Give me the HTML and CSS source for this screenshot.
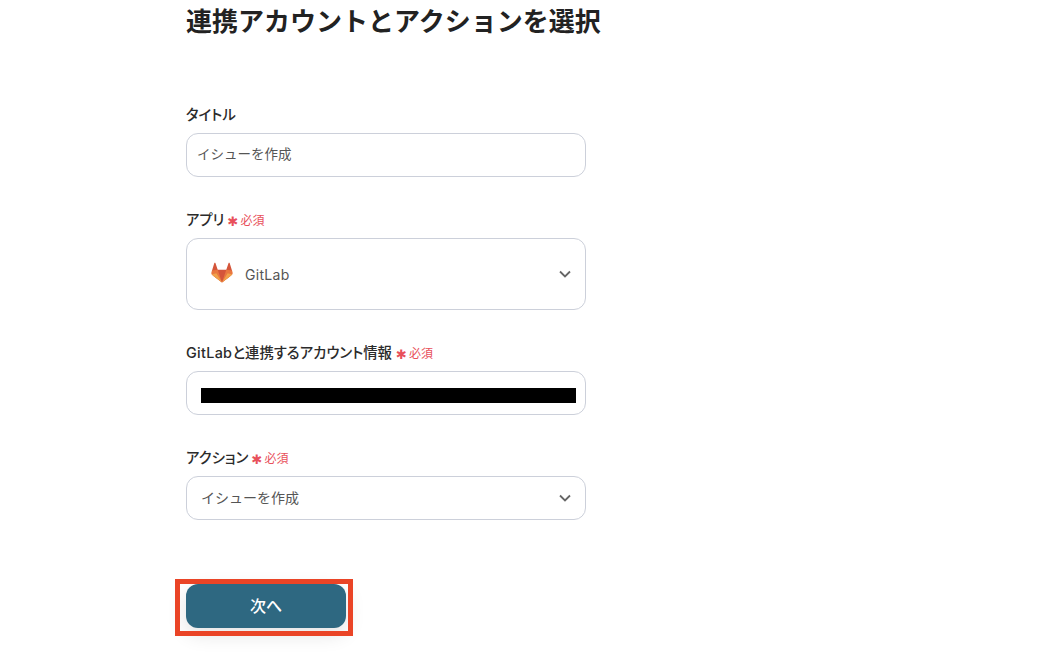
FILE: index.html
```html
<!DOCTYPE html>
<html lang="ja">
<head>
<meta charset="utf-8">
<title>連携アカウントとアクションを選択</title>
<link rel="stylesheet" href="styles.css">
</head>
<body>
<main class="page">
  <h1 class="title">連携アカウントとアクションを選択</h1>
  <form class="form">
    <div class="field">
      <div class="label">タイトル</div>
      <div class="box box-title"><span class="lift">イシューを作成</span></div>
    </div>
    <div class="field">
      <div class="label">アプリ<span class="req"><span class="star">✱</span>必須</span></div>
      <div class="box box-app">
        <svg class="logo" viewBox="0 0 24 23" width="22" height="21" aria-hidden="true">
          <path fill="#d4553a" d="M12 22.5 3 15.6 1 9.6 3.6 1.2c.2-.6 1-.6 1.2 0L7.3 8.6h9.4l2.5-7.4c.2-.6 1-.6 1.2 0L23 9.6l-2 6z"/>
          <path fill="#e9773f" d="M12 22.5 7.3 8.6 1 9.3.4 11.6c-.3 1 0 2 .9 2.7z"/>
          <path fill="#f0a24a" d="m5.8 12.4-5 1.4.5.4L7 18.5l5 4z"/>
          <path fill="#e9773f" d="M12 22.5 16.7 8.6l6.3.7.6 2.3c.3 1 0 2-.9 2.7z"/>
          <path fill="#f0a24a" d="m18.2 12.4 5 1.4-.5.4-5.7 4.3-5 4z"/>
        </svg>
        <span class="app-name">GitLab</span>
        <svg class="chev" viewBox="0 0 12 8" width="12" height="8" aria-hidden="true"><path d="M1 1.5l5 5 5-5" fill="none" stroke="#666" stroke-width="1.8"/></svg>
      </div>
    </div>
    <div class="field">
      <div class="label"><span class="latin">GitLab</span>と連携するアカウント情報<span class="req req-wide"><span class="star">✱</span>必須</span></div>
      <div class="box box-account"><div class="redact"></div></div>
    </div>
    <div class="field">
      <div class="label">アクション<span class="req"><span class="star">✱</span>必須</span></div>
      <div class="box box-action"><span class="lift-sm">イシューを作成</span>
        <svg class="chev" viewBox="0 0 12 8" width="12" height="8" aria-hidden="true"><path d="M1 1.5l5 5 5-5" fill="none" stroke="#666" stroke-width="1.8"/></svg>
      </div>
    </div>
  </form>
  <div class="actions">
    <button class="next" type="button">次へ</button>
    <div class="highlight"></div>
  </div>
</main>
</body>
</html>
```
FILE: styles.css
```css
* { box-sizing: border-box; }
html, body { margin: 0; height: 100%; background: #fff; overflow: hidden; }
body {
  font-family: Inter, "Noto Sans CJK JP", sans-serif;
  color: #333;
}
.page { padding: 0 0 0 186px; width: 100%; }
.title {
  margin: 0;
  height: 44px;
  font-size: 26px;
  line-height: 44px;
  font-weight: 600;
  color: #222;
}
.form { margin-top: 61px; width: 400px; display: flex; flex-direction: column; gap: 33px; }
.field { display: flex; flex-direction: column; gap: 8px; }
.label {
  height: 20px;
  line-height: 20px;
  font-size: 14.4px;
  font-weight: 500;
  font-feature-settings: "palt";
  color: #2b2b2b;
  display: flex;
  align-items: center;
}
.latin { letter-spacing: .3px; }
.req {
  margin-left: 3px;
  margin-top: 2px;
  font-size: 12px;
  font-weight: 400;
  font-feature-settings: normal;
  color: #e8505b;
  display: flex;
  align-items: center;
}
.req-wide { margin-left: 4px; }
.star { width: 11px; margin-right: 2px; text-align: center; font: 13px/1 "DejaVu Sans", sans-serif; }
.box {
  height: 44px;
  border: 1px solid #ccd0da;
  border-radius: 12px;
  display: flex;
  align-items: center;
  font-size: 13.5px;
  color: #555;
  background: #fff;
}
.box-title { padding-left: 10px; }
.lift { margin-top: -5px; }
.lift-sm { margin-top: -2px; font-size: 14px; }
.box-app { height: 72px; padding-left: 24px; }
.logo { flex: none; margin-top: -3px; }
.app-name { margin-left: 12px; font-size: 14px; letter-spacing: .3px; color: #555; }
.chev { margin-left: auto; margin-right: 14px; flex: none; }
.box-account { padding: 5px 9px 0 14px; }
.redact { width: 100%; height: 15px; background: #000; }
.box-action { padding-left: 14px; }
.actions { position: relative; width: 160px; height: 44px; margin-top: 64px; }
.next {
  display: block;
  width: 160px;
  height: 44px;
  padding: 0 0 2px;
  border: 0;
  border-radius: 12px;
  background: #2e6881;
  color: #fff;
  font: 500 16px Inter, "Noto Sans CJK JP", sans-serif;
  box-shadow: 0 6px 20px rgba(0, 0, 0, .12);
}
.highlight {
  position: absolute;
  left: -11px;
  top: -5px;
  width: 178px;
  height: 57px;
  border: 5px solid #ea4426;
  pointer-events: none;
}
```
